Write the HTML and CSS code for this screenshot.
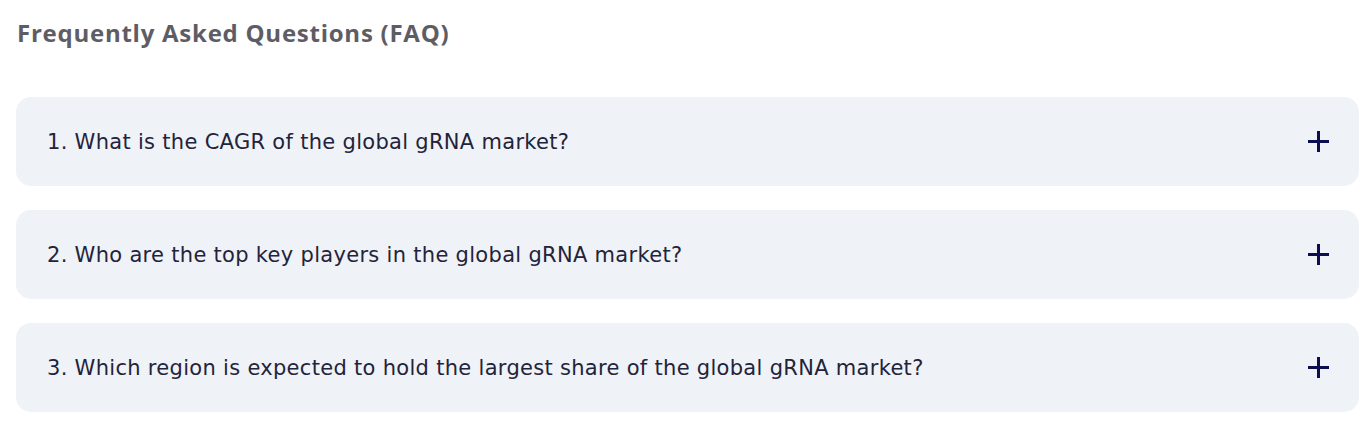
FILE: index.html
```html
<!DOCTYPE html>
<html lang="en">
  <head>
    <meta charset="UTF-8" />
    <title>FAQ</title>
    <link rel="stylesheet" href="styles.css">
  </head>
  <body>
    <h2 class="faq-title">Frequently Asked Questions (FAQ)</h2>

    <div class="faq-list">
      <div class="faq-item">
        <span class="faq-question">1. What is the CAGR of the global gRNA market?</span>
        <span class="faq-plus"></span>
      </div>
      <div class="faq-item">
        <span class="faq-question">2. Who are the top key players in the global gRNA market?</span>
        <span class="faq-plus"></span>
      </div>
      <div class="faq-item">
        <span class="faq-question">3. Which region is expected to hold the largest share of the global gRNA market?</span>
        <span class="faq-plus"></span>
      </div>
    </div>
  </body>
</html>
```

FILE: styles.css
```css
body {
  margin: 0;
  padding: 0 10px 0 16px;
  background: #fff;
  font-family: "DejaVu Sans", Arial, sans-serif;
}

/* titul */
.faq-title {
  margin: 0;
  padding: 17px 0 0 1px;
  height: 97px;
  box-sizing: border-box;
  font-family: "Open Sans", Arial, sans-serif;
  font-size: 24px;
  font-weight: 700;
  letter-spacing: 0.75px;
  line-height: 32px;
  color: #5e5d66;
}

.faq-list {
  display: flex;
  flex-direction: column;
  gap: 24px;
}

.faq-item {
  display: flex;
  align-items: center;
  justify-content: space-between;
  height: 89px;
  padding: 0 30px 0 31px;
  background: #eff2f7;
  border-radius: 15px;
  box-sizing: border-box;
}

.faq-question {
  font-size: 21px;
  letter-spacing: 0.3px;
  color: #23233a;
}

/* plus ikonu */
.faq-plus {
  position: relative;
  width: 21px;
  height: 21px;
}

.faq-plus:before,
.faq-plus:after {
  content: "";
  position: absolute;
  background: #0b0f4f;
}

.faq-plus:before {
  left: 0;
  top: 9px;
  width: 21px;
  height: 3px;
}

.faq-plus:after {
  left: 9px;
  top: 0;
  width: 3px;
  height: 21px;
}
```
